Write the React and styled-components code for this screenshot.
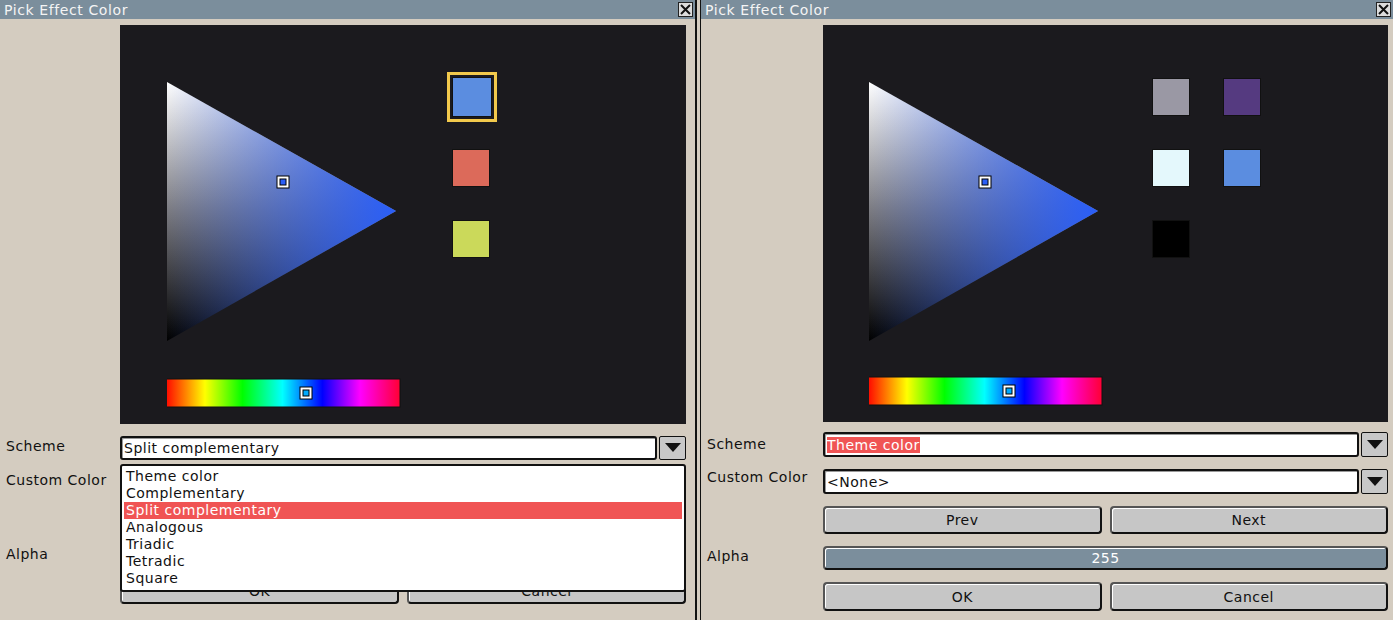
import React from "react";
import styled, { createGlobalStyle } from "styled-components";

const G = createGlobalStyle`
  html,body{margin:0;padding:0;background:#d4ccc0;overflow:hidden;}
  *{box-sizing:border-box;}
  body{font-family:"DejaVu Sans","Liberation Sans",sans-serif;font-size:14px;color:#111;}
`;

const Page = styled.div`display:flex;width:1393px;height:620px;`;
const Panel = styled.div`flex:${p => p.$w ? `0 0 ${p.$w}px` : "1"};display:flex;flex-direction:column;background:#d4ccc0;`;
const Divider = styled.div`flex:0 0 6px;background:#d4ccc0;border-left:2px solid #111;border-right:1px solid #111;`;
const TitleBar = styled.div`height:19px;background:#7b8e9c;color:#f4f4f4;display:flex;align-items:center;justify-content:space-between;padding:0 2px 0 4px;font-size:14px;letter-spacing:0.6px;`;
const Close = styled.div`width:15px;height:15px;border:1px solid #222;background:#ddd;display:flex;align-items:center;justify-content:center;`;
const Body = styled.div`flex:1;display:grid;grid-template-columns:${p => p.$lw}px 1fr;padding:6px ${p => p.$pr}px 0 0;row-gap:${p => p.$gap}px;position:relative;align-content:start;`;
const Canvas = styled.div`grid-column:2;height:${p => p.$h}px;background:#1b1a1e;position:relative;`;
const Label = styled.div`grid-column:1;padding:${p => p.$pt || 0}px 0 0 6px;letter-spacing:0.5px;`;
const Cell = styled.div`grid-column:2;position:relative;display:flex;gap:${p => p.$gap || 0}px;visibility:${p => p.$hidden ? "hidden" : "visible"};`;
const Combo = styled.div`display:flex;gap:2px;width:100%;height:${p => p.$h}px;`;
const Field = styled.div`flex:1;background:#fff;border:2px solid #111;border-radius:3px;box-shadow:inset 1px 1px 0 #999;display:flex;align-items:center;padding-left:2px;letter-spacing:0.5px;`;
const Sel = styled.span`background:#f05454;color:#fff;`;
const Arrow = styled.div`flex:0 0 27px;background:#c8c8c8;border:1px solid #111;border-radius:2px;display:flex;align-items:center;justify-content:center;`;
const Btn = styled.div`flex:1;height:${p => p.$h}px;background:#c6c6c6;border:2px solid #111;border-top-color:#555;border-left-color:#555;border-radius:4px;box-shadow:inset 1px 1px 0 #fff;display:flex;align-items:center;justify-content:center;letter-spacing:0.5px;`;
const Bar = styled(Btn)`background:#7b8e9c;color:#fff;`;
const List = styled.div`position:absolute;left:0;right:0;top:${p => p.$top}px;height:128px;background:#fff;border:2px solid #111;border-radius:3px;padding:2px 2px;z-index:2;visibility:visible;`;
const Item = styled.div`height:17px;line-height:17px;padding-left:2px;letter-spacing:0.5px;background:${p => p.$sel ? "#f05454" : "transparent"};color:${p => p.$sel ? "#fff" : "#111"};`;
const Swatch = styled.div`position:absolute;left:${p => p.$x}px;top:${p => p.$y}px;width:${p => p.$s || 38}px;height:${p => p.$s || 38}px;background:${p => p.$c};border:1px solid #111;${p => p.$sel && "outline:3px solid #f2c94c;outline-offset:2px;"}`;

const Tri = ({ ox, oy, mx, my, hx, hy, hm, id }) => (
  <svg width="300" height="360" style={{ position: "absolute", left: ox, top: oy }}>
    <defs>
      <linearGradient id={id + "v"} x1="0" y1="0" x2="0" y2="1">
        <stop offset="0" stopColor="#fff" /><stop offset="0.5" stopColor="#7a7a80" /><stop offset="1" stopColor="#000" />
      </linearGradient>
      <linearGradient id={id + "h"} x1="0" y1="0" x2="1" y2="0">
        <stop offset="0" stopColor="#2a5ef8" stopOpacity="0" /><stop offset="1" stopColor="#2a5ef8" stopOpacity="1" />
      </linearGradient>
      <linearGradient id={id + "hue"} x1="0" y1="0" x2="1" y2="0">
        <stop offset="0" stopColor="#f00" /><stop offset="0.17" stopColor="#ff0" /><stop offset="0.33" stopColor="#0f0" />
        <stop offset="0.5" stopColor="#0ff" /><stop offset="0.67" stopColor="#00f" /><stop offset="0.83" stopColor="#f0f" /><stop offset="1" stopColor="#f03" />
      </linearGradient>
    </defs>
    <polygon points="0,0 0,259 229,129" fill={`url(#${id}v)`} />
    <polygon points="0,0 0,259 229,129" fill={`url(#${id}h)`} />
    <rect x={mx - 6} y={my - 6} width="12" height="12" fill="#fff" stroke="#000" strokeWidth="1" />
    <rect x={mx - 3} y={my - 3} width="6" height="6" fill="#2a5ef8" stroke="#000" strokeWidth="1" />
    <rect x={hx} y={hy} width="235" height="28" fill={`url(#${id}hue)`} stroke="#111" />
    <rect x={hm - 6} y={hy + 8} width="12" height="12" fill="#fff" stroke="#000" strokeWidth="1" />
    <rect x={hm - 3} y={hy + 11} width="6" height="6" fill="#0af" stroke="#000" strokeWidth="1" />
  </svg>
);

const ArrowIcon = () => <svg width="16" height="10"><polygon points="0,0 16,0 8,9" fill="#111" /></svg>;
const CloseIcon = () => <svg width="11" height="11"><path d="M1 1L10 10M10 1L1 10" stroke="#111" strokeWidth="2" /></svg>;

export default function App() {
  return (
    <Page>
      <G />
      <Panel $w={695}>
        <TitleBar>Pick Effect Color<Close><CloseIcon /></Close></TitleBar>
        <Body $lw={120} $pr={9} $gap={12}>
          <Canvas $h={399}>
            <Tri id="a" ox={47} oy={57} mx={116} my={100} hx={-2} hy={297} hm={139} />
            <Swatch $x={332} $y={52} $s={40} $c="#5b8de0" $sel />
            <Swatch $x={332} $y={124} $c="#dc6a5a" />
            <Swatch $x={332} $y={195} $c="#cbd95a" />
          </Canvas>
          <Label $pt={2}>Scheme</Label>
          <Cell>
            <Combo $h={24}><Field>Split complementary</Field><Arrow><ArrowIcon /></Arrow></Combo>
            <List $top={28}>
              {["Theme color","Complementary","Split complementary","Analogous","Triadic","Tetradic","Square"].map(t =>
                <Item key={t} $sel={t === "Split complementary"}>{t}</Item>)}
            </List>
          </Cell>
          <Label $pt={0}>Custom Color</Label>
          <Cell $hidden><Combo $h={24}><Field>&lt;None&gt;</Field><Arrow><ArrowIcon /></Arrow></Combo></Cell>
          <Label />
          <Cell $gap={8} $hidden><Btn $h={26}>Prev</Btn><Btn $h={26}>Next</Btn></Cell>
          <Label $pt={0}>Alpha</Label>
          <Cell $hidden><Bar $h={24}>255</Bar></Cell>
          <Label />
          <Cell $gap={8} style={{ marginTop: -4 }}><Btn $h={26}>OK</Btn><Btn $h={26}>Cancel</Btn></Cell>
        </Body>
      </Panel>
      <Divider />
      <Panel>
        <TitleBar>Pick Effect Color<Close><CloseIcon /></Close></TitleBar>
        <Body $lw={122} $pr={5} $gap={12}>
          <Canvas $h={397} style={{ marginBottom: -2 }}>
            <Tri id="b" ox={46} oy={57} mx={116} my={100} hx={-2} hy={295} hm={140} />
            <Swatch $x={329} $y={53} $c="#9a98a4" />
            <Swatch $x={400} $y={53} $c="#553a80" />
            <Swatch $x={329} $y={124} $c="#e4f8fc" />
            <Swatch $x={400} $y={124} $c="#5b8de0" />
            <Swatch $x={329} $y={195} $c="#000" />
          </Canvas>
          <Label $pt={4}>Scheme</Label>
          <Cell><Combo $h={25}><Field><Sel>Theme color</Sel></Field><Arrow><ArrowIcon /></Arrow></Combo></Cell>
          <Label $pt={0}>Custom Color</Label>
          <Cell><Combo $h={25}><Field>&lt;None&gt;</Field><Arrow><ArrowIcon /></Arrow></Combo></Cell>
          <Label />
          <Cell $gap={8}><Btn $h={28}>Prev</Btn><Btn $h={28}>Next</Btn></Cell>
          <Label $pt={2}>Alpha</Label>
          <Cell><Bar $h={24}>255</Bar></Cell>
          <Label />
          <Cell $gap={8}><Btn $h={29}>OK</Btn><Btn $h={29}>Cancel</Btn></Cell>
        </Body>
      </Panel>
    </Page>
  );
}
